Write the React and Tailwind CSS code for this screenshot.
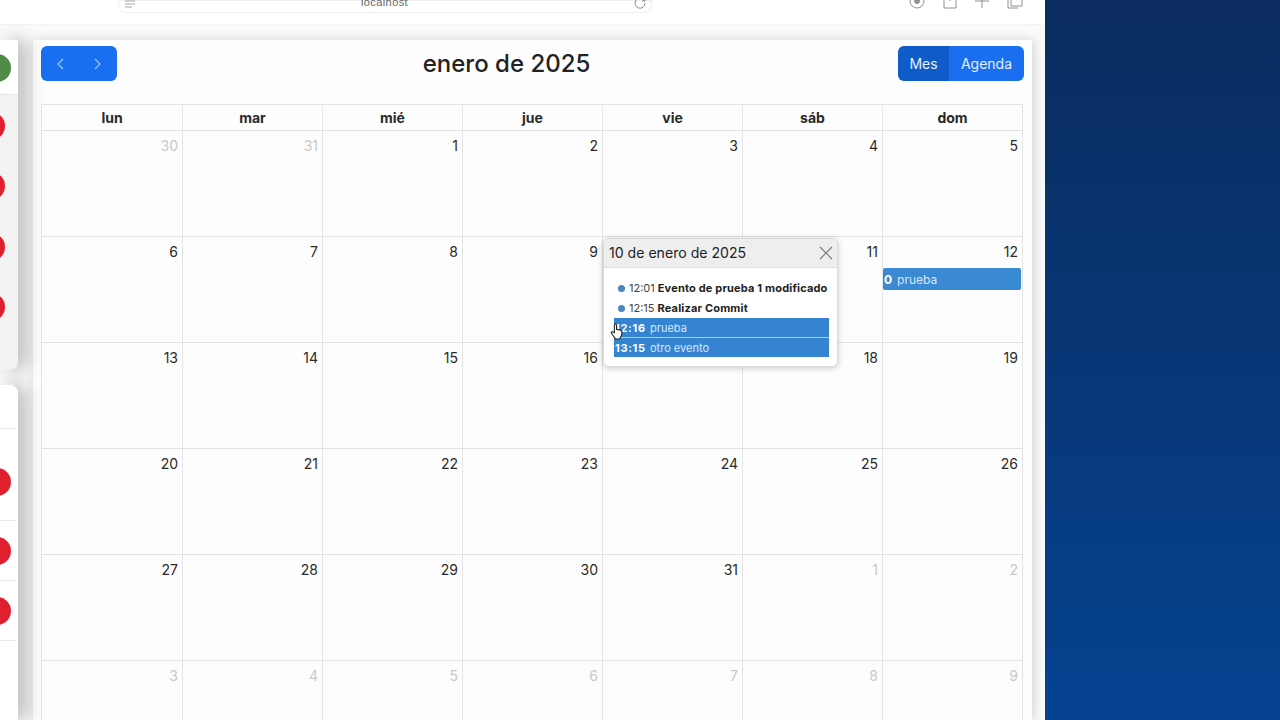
import React from "react";

const weeks = [
  [[30, 1], [31, 1], [1], [2], [3], [4], [5]],
  [[6], [7], [8], [9], [10], [11], [12]],
  [[13], [14], [15], [16], [17], [18], [19]],
  [[20], [21], [22], [23], [24], [25], [26]],
  [[27], [28], [29], [30], [31], [1, 1], [2, 1]],
  [[3, 1], [4, 1], [5, 1], [6, 1], [7, 1], [8, 1], [9, 1]],
];
const heads = ["lun", "mar", "mié", "jue", "vie", "sáb", "dom"];

function Dot({ green, far, near }) {
  return (
    <div className={`h-full flex items-center justify-end ${far ? "pr-[13px]" : near ? "pr-[5px]" : "pr-[7px]"}`}>
      <div className={`shrink-0 w-[28px] h-[28px] rounded-full flex items-center justify-center ${green ? "bg-[#4f8a46]" : "bg-[#e0202f]"}`} />
    </div>
  );
}

function Top() {
  return (
    <div className="h-[25px] shrink-0 bg-white border-b border-[#f3f3f3] flex overflow-hidden">
      <div className="ml-[118px] w-[534px] h-[13px] bg-white border border-[#eeeeee] rounded-b-lg flex items-end justify-between pl-[6px] pr-[5px]">
        <svg width="10" height="8" viewBox="0 0 10 8" className="mb-[4px]" stroke="#a8a8a8" fill="none"><path d="M0 1h10M0 4h10M0 7h7" /></svg>
        <span className="text-[11px] leading-[12px] tracking-[0.4px] text-[#666] font-['Liberation_Sans',sans-serif] mb-[4px]">localhost</span>
        <svg width="12" height="12" viewBox="0 0 12 12" className="mb-[3px]" stroke="#8a8a8a" fill="none"><path d="M10.5 4A5 5 0 1 0 11 6M11 1v3H8" /></svg>
      </div>
      <div className="ml-[257px] flex gap-[18px] items-end h-[9px] text-[#909090]">
        <svg width="16" height="16" viewBox="0 0 16 16" fill="none" stroke="currentColor"><circle cx="8" cy="8" r="7" /><circle cx="8" cy="8" r="2.5" fill="currentColor" /></svg>
        <svg width="14" height="16" viewBox="0 0 14 16" fill="none" stroke="currentColor"><path d="M1 2h12v13H1zM7 0v8" /></svg>
        <svg width="14" height="16" viewBox="0 0 14 16" fill="none" stroke="currentColor"><path d="M7 0v15M0 8h14" /></svg>
        <svg width="16" height="16" viewBox="0 0 16 16" fill="none" stroke="currentColor"><path d="M4 2h11v11H4zM1 4v11h10" /></svg>
      </div>
    </div>
  );
}

function Popover() {
  return (
    <div className="absolute left-[603px] top-[238px] w-[235px] h-[129px] bg-white rounded-md border border-[#dcdcdc] shadow-[0_1px_6px_rgba(0,0,0,0.22)] overflow-hidden text-[#222]">
      <div className="h-[29px] bg-[#eeeeee] border-b border-[#dedede] flex items-center justify-between pl-[5px] pr-[4px]">
        <span className="text-[14.1px] leading-none">10 de enero de 2025</span>
        <svg width="14" height="14" viewBox="0 0 14 14" stroke="#777" strokeWidth="1.1" fill="none"><path d="M1 1l12 12M13 1L1 13" /></svg>
      </div>
      <div className="pt-[10px] pl-[10px] pr-[8px] text-[11px] leading-[20px]">
        <div className="h-[20px] flex items-center pl-[4px]">
          <span className="w-[7px] h-[7px] rounded-full bg-[#4a86c0] mr-[4px]" />
          <span className="text-[#444]">12:01</span>
          <b className="ml-[3px] font-bold tracking-[0.17px]">Evento de prueba 1 modificado</b>
        </div>
        <div className="h-[20px] flex items-center pl-[4px]">
          <span className="w-[7px] h-[7px] rounded-full bg-[#4a86c0] mr-[4px]" />
          <span className="text-[#444]">12:15</span>
          <b className="ml-[3px] font-bold tracking-[0.17px]">Realizar Commit</b>
        </div>
        <div className="h-[20px] bg-[#3584d2] border-b border-[#a9cdf0] flex items-center pl-[1px] text-white">
          <b className="w-[35px] tracking-[0.7px]">12:16</b>
          <span className="text-[#d6e8fa]">prueba</span>
        </div>
        <div className="h-[19px] bg-[#3584d2] flex items-center pl-[1px] text-white">
          <b className="w-[35px] tracking-[0.7px]">13:15</b>
          <span className="text-[#d6e8fa]">otro evento</span>
        </div>
      </div>
    </div>
  );
}

export default function App() {
  return (
    <div className="relative w-[1280px] h-[720px] overflow-hidden flex font-['Inter','Liberation_Sans',sans-serif]">
      <div className="w-[1045px] h-full flex flex-col bg-[#fafafa] shrink-0">
        <Top />
        <div className="flex-1 flex min-h-0 pt-[15px]">
          <div className="relative z-10 w-[18px] shrink-0 flex flex-col">
            <div className="h-[330px] bg-[#f3f3f3] rounded-br-lg shadow-[8px_0_18px_rgba(0,0,0,0.28)] flex flex-col">
              <div className="h-[55px] bg-white border-b border-[#e6e6e6]"><div className="h-[56px]"><Dot green /></div></div>
              <div className="h-[61px]"><Dot far /></div>
              <div className="h-[60px]"><Dot far /></div>
              <div className="h-[61px]"><Dot far /></div>
              <div className="h-[60px]"><Dot far /></div>
            </div>
            <div className="mt-[15px] flex-1 bg-white rounded-tr-lg shadow-[8px_0_18px_rgba(0,0,0,0.28)] flex flex-col pr-[2px]">
              <div className="h-[44px] border-b border-[#e8e8e8]" />
              <div className="h-[92px] pt-[14px] border-b border-[#e8e8e8]"><Dot near /></div>
              <div className="h-[60px] border-b border-[#e8e8e8]"><Dot near /></div>
              <div className="h-[60px] border-b border-[#e8e8e8]"><Dot near /></div>
            </div>
          </div>
          <div className="ml-[15px] w-[999px] bg-[#fdfdfd] shadow-[2px_0_10px_rgba(0,0,0,0.16)] pt-[6px] pl-[8px] pr-[9px]">
            <div className="flex items-center justify-between h-[35px]">
              <div className="w-[76px] h-[35px] bg-[#1a6ff0] rounded-md flex items-center text-[#9cc4ff]">
                <svg width="38" height="16" viewBox="0 0 38 16" fill="none" stroke="currentColor" strokeWidth="1.2"><path d="M22 3l-5 5 5 5" /></svg>
                <svg width="38" height="16" viewBox="0 0 38 16" fill="none" stroke="currentColor" strokeWidth="1.2"><path d="M16 3l5 5-5 5" /></svg>
              </div>
              <h1 className="text-[24px] leading-none font-medium text-[#222] mr-[2px] mt-[1px]">enero de 2025</h1>
              <div className="w-[126px] h-[35px] -mr-[1px] rounded-md overflow-hidden flex text-[14px] text-[#e6f0ff]">
                <div className="w-[51px] bg-[#0f5cc8] flex items-center justify-center">Mes</div>
                <div className="flex-1 bg-[#1a6ff0] flex items-center justify-center">Agenda</div>
              </div>
            </div>
            <div className="mt-[23px] border border-[#e4e4e4] border-b-0">
              <div className="grid grid-cols-7 h-[26px]">
                {heads.map((h, i) => (
                  <div key={h} className={`flex items-center justify-center text-[14px] font-bold text-[#2a2a2a] border-b border-[#e2e2e2] ${i ? "border-l border-l-[#e8e8e8]" : ""}`}>{h}</div>
                ))}
              </div>
              {weeks.map((w, i) => (
                <div key={i} className="grid grid-cols-7 h-[106px]">
                  {w.map(([d, muted], j) => (
                    <div key={j} className={`relative border-b border-[#e2e2e2] ${j ? "border-l border-l-[#e4e4e4]" : ""} text-right pr-[4px] pt-[6px] text-[14px] leading-[18px] ${muted ? "text-[#c8c8c8]" : "text-[#2a2a2a]"}`}>
                      {d}
                      {i === 1 && j === 6 && (
                        <div className="absolute left-0 right-[1px] top-[31px] h-[22px] pt-[1px] bg-[#3a89d3] rounded-[2px] flex items-center text-[12px] text-[#d6e8fa] pl-[1px] overflow-hidden">
                          <b className="text-white mr-[5px]">0</b>prueba
                        </div>
                      )}
                    </div>
                  ))}
                </div>
              ))}
            </div>
          </div>
        </div>
      </div>
      <div className="flex-1 bg-gradient-to-b from-[#0a2c5e] to-[#044290]" />
      <Popover />
      <svg className="absolute left-[610px] top-[323px]" width="14" height="17" viewBox="0 0 13 16" fill="#fff" stroke="#222" strokeWidth="1"><path d="M4 7V2a1 1 0 0 1 2 0v4l5 1v4l-2 4H5L1 9c0-1 1-1 3 0z" /></svg>
    </div>
  );
}
